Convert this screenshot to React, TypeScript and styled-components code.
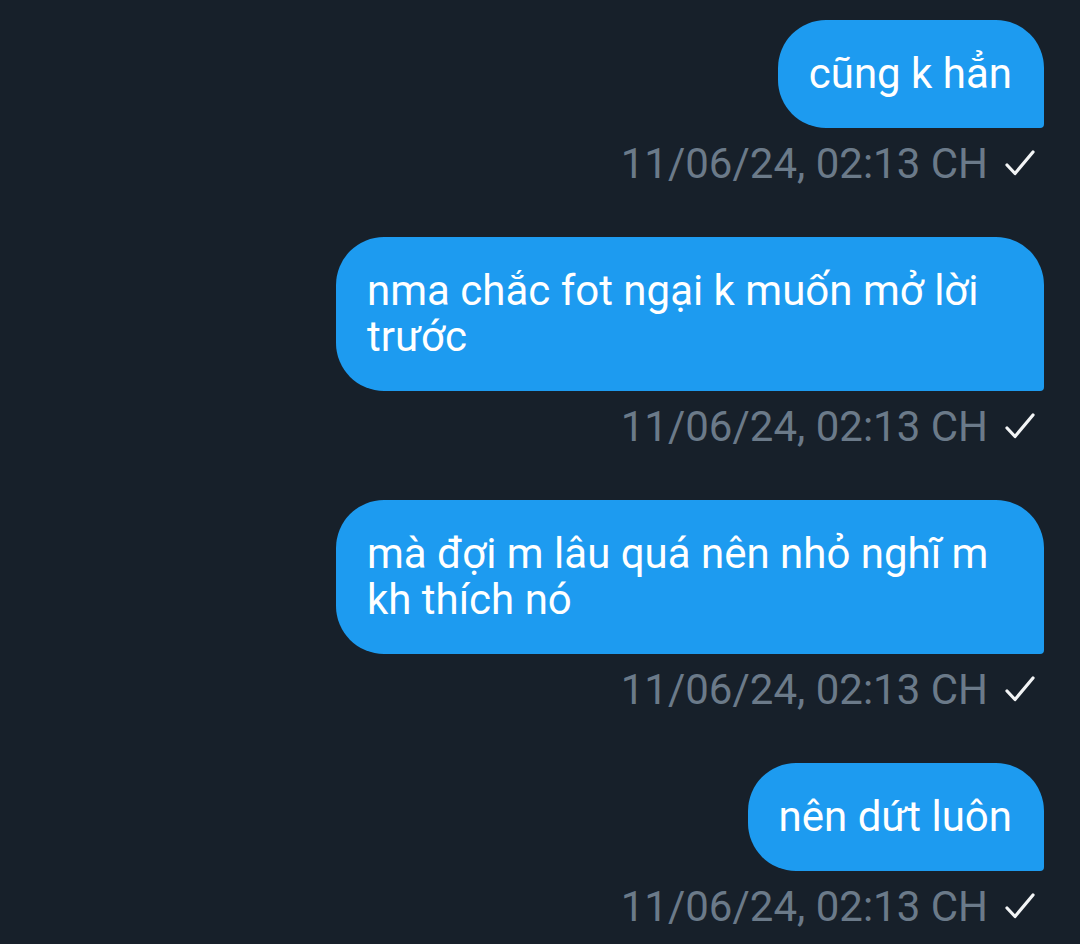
import React from "react";
import styled, { createGlobalStyle } from "styled-components";

const GlobalStyle = createGlobalStyle`
  html, body {
    margin: 0;
    padding: 0;
    background: #17202a;
  }
  body {
    font-family: Roboto, "Noto Sans", sans-serif;
  }
`;

const Page = styled.div`
  width: 1080px;
  height: 944px;
  box-sizing: border-box;
  background: #17202a;
  padding: 20px 36px 0 0;
  display: flex;
  flex-direction: column;
  align-items: flex-end;
  overflow: hidden;
`;

const Group = styled.div`
  display: flex;
  flex-direction: column;
  align-items: flex-end;
  margin-bottom: 49px;
`;

const Bubble = styled.div`
  max-width: 708px;
  box-sizing: border-box;
  background: #1d9bf0;
  color: #ffffff;
  font-size: 42px;
  line-height: 46px;
  padding: 31px 32px 31px 31px;
  border-radius: 48px 48px 4px 48px;
  word-wrap: break-word;
`;

const Meta = styled.div`
  display: flex;
  align-items: center;
  gap: 16px;
  margin-top: 10px;
  margin-right: 8px;
  height: 50px;
  color: #6b7a89;
  font-size: 42px;
`;

const Check = () => (
  <svg width="32" height="30" viewBox="0 0 32 30" fill="none">
    <path d="M3 17 L11 25.5 L29 4" stroke="#f2f4f5" strokeWidth="3.2" strokeLinecap="round" strokeLinejoin="round" />
  </svg>
);

const messages = [
  "cũng k hẳn",
  "nma chắc fot ngại k muốn mở lời trước",
  "mà đợi m lâu quá nên nhỏ nghĩ m kh thích nó",
  "nên dứt luôn",
];

export default function App() {
  return (
    <>
      <GlobalStyle />
      <Page>
        {messages.map((m, i) => (
          <Group key={i}>
            <Bubble>{m}</Bubble>
            <Meta>
              <span>11/06/24, 02:13 CH</span>
              <Check />
            </Meta>
          </Group>
        ))}
      </Page>
    </>
  );
}
